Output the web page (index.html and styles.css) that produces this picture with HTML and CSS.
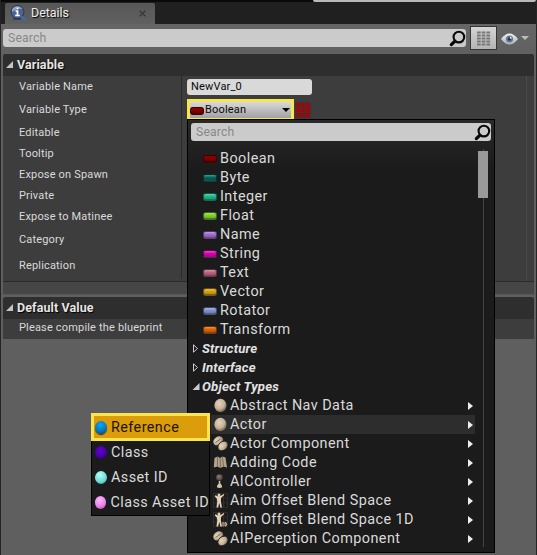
FILE: index.html
```html
<!DOCTYPE html>
<html lang="en">
<head>
<meta charset="utf-8">
<title>Details</title>
<link rel="stylesheet" href="styles.css">
</head>
<body>
<svg class="defs" width="0" height="0" aria-hidden="true">
  <defs>
    <radialGradient id="cream" cx=".4" cy=".35" r=".7"><stop offset="0" stop-color="#e4d3bb"/><stop offset=".6" stop-color="#c4b297"/><stop offset="1" stop-color="#5d5140"/></radialGradient>
    <radialGradient id="grey" cx=".4" cy=".35" r=".7"><stop offset="0" stop-color="#8d8178"/><stop offset="1" stop-color="#37302c"/></radialGradient>
    <linearGradient id="eyeg" x1="0" y1="0" x2="0" y2="1"><stop offset="0" stop-color="#f4f4f4"/><stop offset="1" stop-color="#a9b0b8"/></linearGradient>
    <symbol id="mag" viewBox="0 0 16 16"><circle cx="9.3" cy="6.7" r="5" fill="none" stroke="#080808" stroke-width="2"/><path d="M5.4 10.6 2.2 13.8" stroke="#080808" stroke-width="3" stroke-linecap="round"/></symbol>
    <symbol id="ball" viewBox="0 0 15 15"><ellipse cx="7.5" cy="7.5" rx="6.1" ry="6.7" fill="url(#cream)"/></symbol>
    <symbol id="comp" viewBox="0 0 15 15"><ellipse cx="5.300" cy="4.900" rx="5.300" ry="4.300" transform="rotate(-35 5.300 4.900)" fill="url(#cream)"/><path d="M2.500 6.500 7.500 3" stroke="#5d5140" stroke-width=".8"/><ellipse cx="10" cy="10" rx="5.600" ry="4.300" transform="rotate(-40 10 10)" fill="url(#cream)" stroke="#1b1b1b" stroke-width=".8"/></symbol>
    <symbol id="book" viewBox="0 0 15 15"><path d="M1.500 3 4.500 1.500 7 3 9.500 1.500 12.500 2.500 14 12.500 10.500 11.500 7.500 13 4.500 11.500.8 12.500Z" fill="#b3a288"/><path d="M4.500 2v9.500M7.200 3l.3 9.500M9.500 2l1 9.500" stroke="#6f624f" stroke-width=".8"/></symbol>
    <symbol id="pawn" viewBox="0 0 15 15"><circle cx="6.500" cy="3.600" r="3.300" fill="url(#grey)"/><path d="M5.800 7h1.500v2.500c1 .8 1.700 2 1.900 3.800q-2.700 1.600-5.300 0c.2-1.800.900-3 1.900-3.800Z" fill="#d8c7ae"/></symbol>
    <symbol id="aim" viewBox="0 0 15 15"><path d="M.5.500h14v14H.5ZM.5 5h14M.5 10h14M10.500.5v14M3.500.5v14" fill="none" stroke="#39342d" stroke-width=".7"/><circle cx="6" cy="1.900" r="1.500" fill="#e4d2b8"/><path d="M2.300 2.200 4.500 3.200 7.500 3 10.800 1 11.200 2 8 5 7.900 8.500 9 14.500H7.300L6.200 9.800 5.200 14.500H3.500L4.300 8.500 3.800 5.500 1.800 3.500Z" fill="#e4d2b8"/></symbol>
  </defs>
</svg>
<div class="window">
  <div class="tabbar">
    <div class="tab">
      <svg class="tab-icon" viewBox="0 0 17 17"><circle cx="7.500" cy="7" r="6.500" fill="#4d638f" stroke="#273653"/><path d="M2 4.500a6 6 0 0 1 10.500-.5Q7 3 2 7Z" fill="#90a4c6"/><path d="M11.500 12l3.500 2.500" stroke="#4568a8" stroke-width="2.400" stroke-linecap="round"/><path d="M3 14h8" stroke="#182944"/><path d="M7.500 2.500v1.800M5.500 6h2v4.500M5.200 10.500h4.600" fill="none" stroke="#fff" stroke-width="1.700"/></svg>
      <span>Details</span>
      <svg class="close" viewBox="0 0 7 7"><path d="M.7.700l5.600 5.600M6.300.700.700 6.300" stroke="#373737" stroke-width="1.300"/></svg>
    </div>
    <div class="top-edge"></div>
  </div>
  <div class="toolbar">
    <div class="search"><span>Search</span><svg class="mag"><use href="#mag"/></svg></div>
    <div class="grid-button"><svg width="14" height="15" viewBox="0 0 14 15"><path d="M0 1.500h14M0 4.500h14M0 7.500h14M0 10.500h14M0 13.500h14" stroke="#777" stroke-width="2" stroke-dasharray="3.700 1"/></svg></div>
    <svg class="eye" viewBox="0 0 17 12"><path d="M0 6Q8.500-5 17 6 8.500 17 0 6Z" fill="url(#eyeg)"/><circle cx="8.500" cy="6" r="3.600" fill="#667990"/><circle cx="8.500" cy="6" r="1.700" fill="#27364a"/><circle cx="9.700" cy="4.800" r=".9" fill="#fff"/></svg>
    <span class="caret light"></span>
  </div>
  <section class="panel">
    <h2><i class="open"></i>Variable</h2>
    <div class="props">
      <div class="labels">
        <div class="r21">Variable Name</div>
        <div class="r24">Variable Type</div>
        <div class="r22">Editable</div>
        <div class="r21">Tooltip</div>
        <div class="r21">Expose on Spawn</div>
        <div class="r21">Private</div>
        <div class="r21">Expose to Matinee</div>
        <div class="r25">Category</div>
        <div class="r27">Replication</div>
      </div>
      <div class="values">
        <div class="name-input">NewVar_0</div>
        <div class="type-row">
          <div class="combo"><i class="pill boolean"></i><span>Boolean</span><i class="caret dark"></i></div>
          <div class="array"><i></i><i></i><i></i><i></i><i></i><i></i><i></i><i></i><i></i></div>
        </div>
      </div>
      <div class="gutter"></div>
    </div>
    <div class="footer"></div>
  </section>
  <section class="panel default">
    <h2><i class="open"></i>Default Value</h2>
    <div class="message">Please compile the blueprint</div>
  </section>
</div>

<div class="dropdown">
  <div class="search menu-search"><span>Search</span><svg class="mag"><use href="#mag"/></svg></div>
  <div class="content">
    <div class="list">
      <div class="item"><i class="pill boolean"></i>Boolean</div>
      <div class="item"><i class="pill byte"></i>Byte</div>
      <div class="item"><i class="pill integer"></i>Integer</div>
      <div class="item"><i class="pill float"></i>Float</div>
      <div class="item"><i class="pill name"></i>Name</div>
      <div class="item"><i class="pill string"></i>String</div>
      <div class="item"><i class="pill text"></i>Text</div>
      <div class="item"><i class="pill vector"></i>Vector</div>
      <div class="item"><i class="pill rotator"></i>Rotator</div>
      <div class="item"><i class="pill transform"></i>Transform</div>
      <div class="group"><svg viewBox="0 0 8 9"><path d="M1.500.800v7.400L5.500 4.500Z" fill="none" stroke="#ccc"/></svg>Structure</div>
      <div class="group"><svg viewBox="0 0 8 9"><path d="M1.500.800v7.400L5.500 4.500Z" fill="none" stroke="#ccc"/></svg>Interface</div>
      <div class="group"><svg viewBox="0 0 8 9"><path d="M7.500 1v7H.5Z" fill="#ccc"/></svg>Object Types</div>
      <div class="object"><svg><use href="#ball"/></svg><span>Abstract Nav Data</span><i class="arrow"></i></div>
      <div class="object active"><svg><use href="#ball"/></svg><span>Actor</span><i class="arrow"></i></div>
      <div class="object"><svg><use href="#comp"/></svg><span>Actor Component</span><i class="arrow"></i></div>
      <div class="object"><svg><use href="#book"/></svg><span>Adding Code</span><i class="arrow"></i></div>
      <div class="object"><svg><use href="#pawn"/></svg><span>AIController</span><i class="arrow"></i></div>
      <div class="object"><svg><use href="#aim"/></svg><span>Aim Offset Blend Space</span><i class="arrow"></i></div>
      <div class="object"><svg><use href="#aim"/><path d="M10 10v4.500M12 10.500v3.500h.8q1.700-1.700 0-3.500Z" fill="none" stroke="#e8d5a8"/></svg><span>Aim Offset Blend Space 1D</span><i class="arrow"></i></div>
      <div class="object"><svg><use href="#comp"/></svg><span>AIPerception Component</span><i class="arrow"></i></div>
    </div>
    <div class="scrollbar"><div class="thumb"></div></div>
  </div>
</div>

<div class="submenu">
  <div class="choice selected"><i class="orb blue"></i>Reference</div>
  <div class="choice"><i class="orb purple"></i>Class</div>
  <div class="choice"><i class="orb cyan"></i>Asset ID</div>
  <div class="choice"><i class="orb pink"></i>Class Asset ID</div>
</div>
</body>
</html>
```
FILE: styles.css
```css
* { box-sizing: border-box; }
body { margin: 0; width: 537px; height: 555px; overflow: hidden; position: relative; background: #5f5f5f; font-family: Roboto, "Liberation Sans", sans-serif; font-size: 11px; letter-spacing: .17px; color: #dadada; white-space: nowrap; }
.defs { position: absolute; }
.window { height: 555px; border-left: 1px solid #252525; border-right: 1px solid #252525; }
.tabbar { height: 24px; background: #202020; border-top: 2px solid #090909; display: flex; justify-content: space-between; }
.tab { width: 150px; height: 21px; margin: 1px 0 0 4px; padding: 0 9px 2px 5px; background: linear-gradient(#575757, #606060); border-radius: 2px 2px 0 0; display: flex; align-items: center; color: #eee; font-size: 12.5px; letter-spacing: -.05px; text-shadow: 1px 1px 1px #000; }
.tab-icon { width: 17px; height: 17px; margin: 1px 4px 0 0; }
.close { width: 7px; height: 7px; margin: 2px 0 0 auto; }
.top-edge { width: 223px; height: 2px; margin-top: -2px; background: #b9bab8; border-radius: 0 0 3px 3px; }
.toolbar { height: 30px; display: flex; align-items: center; padding: 0 5px 2px 2px; background: linear-gradient(#666, #606060); }
.search { height: 18px; display: flex; align-items: center; justify-content: space-between; border-radius: 3px; background: #cbcbcb; color: #898989; font-size: 12.2px; padding: 0 0 0 5px; }
.toolbar .search { width: 463px; }
.mag { width: 17px; height: 17px; }
.grid-button { width: 27px; height: 24px; margin-left: 4px; border: 1px solid #363636; background: linear-gradient(#d5d5d5, #b4b4b4); display: flex; align-items: center; justify-content: center; }
.eye { width: 17px; height: 12px; margin: 1px 3px 0 4px; }
.caret { border: 4px solid transparent; border-bottom: 0; }
.caret.light { border-top-color: #bdbdbd; }
.caret.dark { border-width: 4px 4px 0; border-top-color: #050505; margin-left: auto; }
.panel { margin: 0 2px; background: #3d3d3d; border-radius: 3px 3px 0 0; }
h2 { height: 22px; margin: 0; padding: 0 0 1px 3px; background: #2e2e2e; border-radius: 3px 3px 0 0; display: flex; align-items: center; font-size: 12.5px; letter-spacing: .1px; font-weight: 700; color: #e5e5e5; text-shadow: 1px 1px 1px #000; }
.open { width: 7px; height: 7px; margin-right: 4px; background: #c4c4c4; clip-path: polygon(100% 0, 100% 100%, 0 100%); }
.props { height: 205px; display: flex; }
.labels { width: 179px; height: 203px; padding-left: 16px; border-right: 1px solid #2a2a2a; }
.labels div { display: flex; align-items: center; padding-bottom: 1px; }
.r21 { height: 21px; }
.r22 { height: 22px; }
.r24 { height: 24px; }
.labels .r22, .labels .r24 { padding: 1px 0 0; }
.r25 { height: 25px; }
.r27 { height: 27px; }
.values { padding: 3px 0 0 5px; color: #090909; }
.name-input { width: 125px; height: 16px; line-height: 15px; border-radius: 3px; background: #d9d9d9; padding-left: 4px; }
.type-row { display: flex; align-items: center; margin-top: 4px; gap: 1px; }
.combo { width: 107px; height: 22px; border: 3px solid #f5e753; background: linear-gradient(#d9d9d9, #a1a1a1); display: flex; align-items: center; padding-right: 1px; }
.combo span { margin-left: 1px; margin-top: -2px; }
.array { display: grid; grid-template-columns: repeat(3, 4px); grid-auto-rows: 4px; gap: 1px; padding: 1px; background: #49302f; }
.array i { background: #98090f; }
.gutter { margin-left: auto; width: 8px; border-left: 1px solid #4b4b4b; }
.footer { height: 14px; background: #464646; border-top: 1px solid #2b2b2b; border-bottom: 1px solid #575757; }
.default { margin-top: 2px; }
.message { height: 20px; padding: 0 0 3px 16px; display: flex; align-items: center; }
.dropdown { position: absolute; left: 187px; top: 119px; width: 308px; height: 434px; padding: 3px; border: 1px solid #000; background: linear-gradient(#292929, #1b1b1b 50px); }
.menu-search { width: 300px; margin-left: 0; }
.content { display: flex; margin-top: 8px; }
.list { width: 284px; font-size: 14.4px; letter-spacing: .45px; line-height: 17px; color: #dadada; }
.item, .group, .object { height: 19px; display: flex; align-items: center; padding-bottom: 0; }
.item { padding-left: 12px; }
.pill { width: 14px; height: 8px; margin: 0 3px 0 0; border-radius: 3px; border: 1px solid #0007; border-bottom-width: 2px; background: linear-gradient(#fff5, transparent 50%, #0002) var(--c); }
.combo .pill { margin: 2px 0 0; }
.boolean { --c: #7c0000; background: linear-gradient(#900, #650000); }
.byte { --c: #006459; }
.integer { --c: #16bb89; }
.float { --c: #7bd027; }
.name { --c: #a269d4; }
.string { --c: #da00b2; }
.text { --c: #bd5f83; }
.vector { --c: #d2a010; }
.rotator { --c: #7e90d4; }
.transform { --c: #dc6100; }
.group { font-weight: 700; font-style: italic; font-size: 13.2px; letter-spacing: .2px; padding: 0 0 1px 1px; color: #e3e3e3; }
.group svg { width: 8px; height: 9px; margin-right: 2px; }
.object { margin-left: 20px; padding-right: 2px; }
.object svg { width: 15px; height: 15px; margin: 0 2px 0 2px; }
.object.active { background: #2d2d2d; }
.arrow { margin: 0 0 0 auto; border: 4px solid transparent; border-left: 5px solid #eee; border-right: 0; }
.scrollbar { width: 10px; margin-left: 3px; height: 398px; background: linear-gradient(#444, #444) center / 1px 100% no-repeat; }
.thumb { height: 47px; margin-top: 2px; background: #999; }
.submenu { position: absolute; left: 91px; top: 413px; width: 119px; height: 103px; border: 1px solid #000; background: #1b1b1b; font-size: 14.4px; letter-spacing: .42px; line-height: 17px; color: #dadada; }
.choice { height: 25px; display: flex; align-items: center; padding: 0 0 1px 3px; }
.selected { width: 119px; height: 28px; margin: -1px -1px -1px; border: 3px solid #fae54e; background: #dc9d0b; color: #1b1404; padding: 0 0 0 1px; }
.orb { width: 12px; height: 13px; margin-right: 4px; border-radius: 50%; }
.blue { background: radial-gradient(circle at 45% 30%, #16a5ef, #0074ba 60%, #052b45); box-shadow: 0 1px 1px #222; }
.purple { background: radial-gradient(circle at 40% 35%, #6300d0, #4300a0 60%, #16002e); }
.cyan { background: radial-gradient(circle at 40% 30%, #b2fff8, #6ed9d1 60%, #237c78); }
.pink { background: radial-gradient(circle at 40% 30%, #ffb6ff, #e77ee4 60%, #873f86); }
```
